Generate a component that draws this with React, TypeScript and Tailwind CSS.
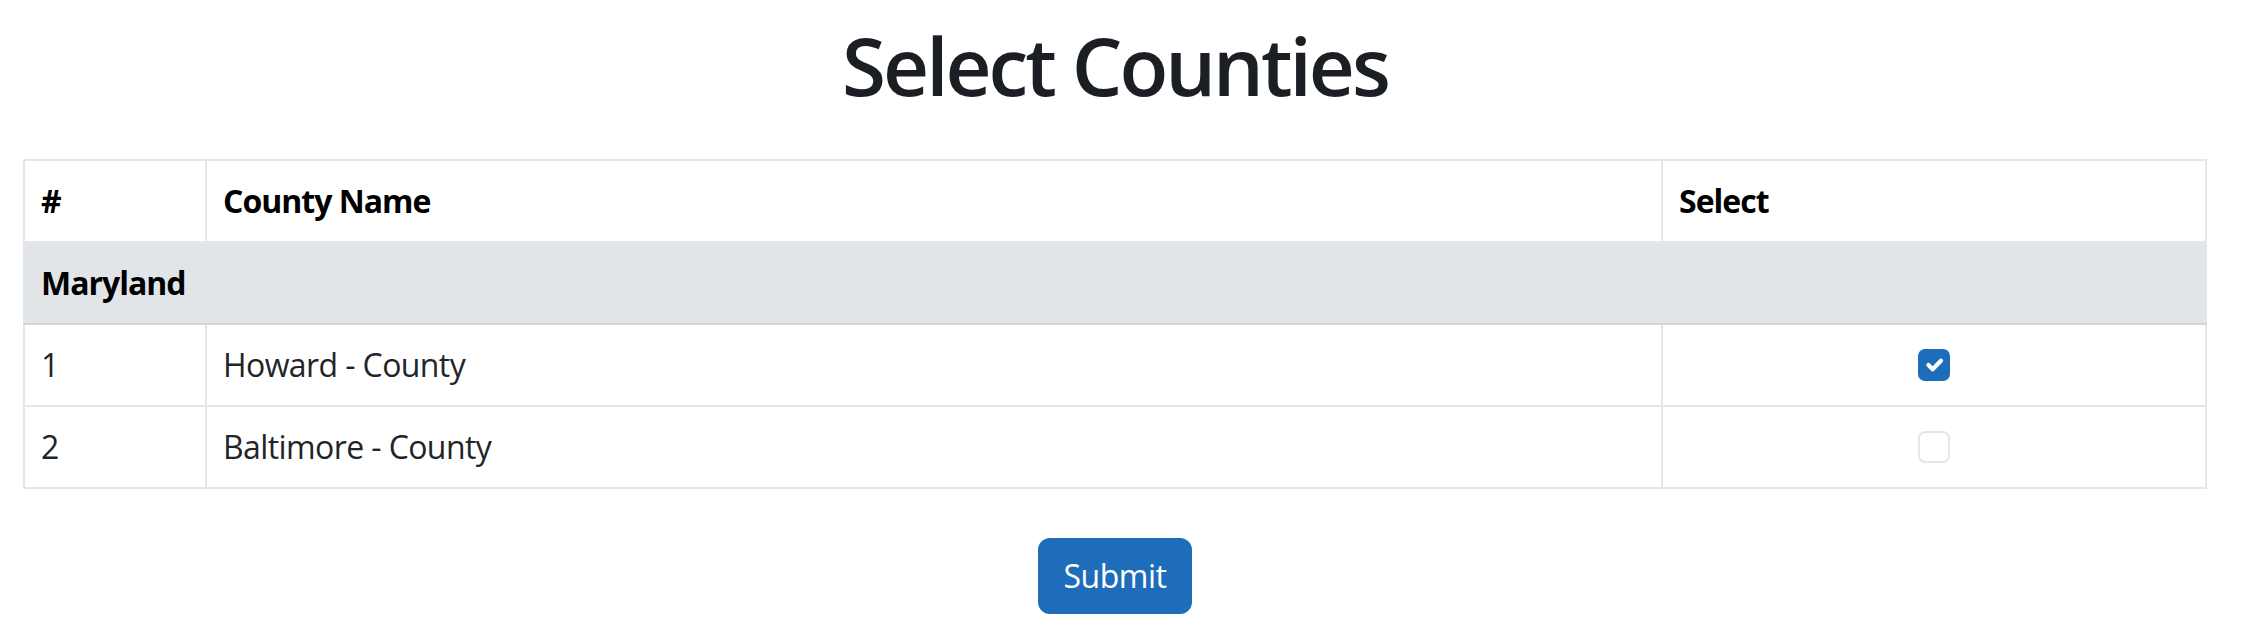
import { useState } from 'react';

interface County {
  id: number;
  name: string;
}

const counties: County[] = [
  { id: 1, name: 'Howard - County' },
  { id: 2, name: 'Baltimore - County' },
];

const CheckBox = ({ checked, onToggle }: { checked: boolean; onToggle: () => void }) => (
  <button
    type="button"
    onClick={onToggle}
    className={
      checked
        ? 'flex h-[32px] w-[32px] items-center justify-center rounded-[7px] border-2 border-[#1e6dbb] bg-[#1e6dbb]'
        : 'flex h-[32px] w-[32px] items-center justify-center rounded-[7px] border-2 border-[#e3e6ea] bg-white'
    }
  >
    {checked && (
      <svg viewBox="0 0 20 20" className="h-[28px] w-[28px]">
        <path d="m6 10 3 3 6-6" fill="none" stroke="#fff" strokeWidth="3" strokeLinecap="round" strokeLinejoin="round" />
      </svg>
    )}
  </button>
);

export default function App() {
  const [selected, setSelected] = useState<Record<number, boolean>>({ 1: true });

  return (
    <div className="min-h-screen bg-white pl-[23px] pr-[37px] pt-[17px] font-['Open_Sans',sans-serif] text-[#212529]">
      <h1 className="mb-[46px] text-center text-[80px] font-semibold leading-[1.2] tracking-[-3px] text-[#1b1f23]">Select Counties</h1>

      <table className="w-full border-collapse border-2 border-[#e3e6ea] text-[32px] leading-[48px] tracking-[-0.6px]">
        <thead>
          <tr className="text-left font-bold tracking-[-1px] text-black">
            <th className="w-[182px] border-2 border-[#e3e6ea] px-[16px] py-[16px]">#</th>
            <th className="w-[1456px] border-2 border-[#e3e6ea] px-[16px] py-[16px]">County Name</th>
            <th className="border-2 border-[#e3e6ea] px-[16px] py-[16px]">Select</th>
          </tr>
        </thead>
        <tbody>
          <tr className="bg-[#e2e5e8]">
            <td colSpan={3} className="border-2 border-b-[#d2d5d9] border-[#e3e6ea] px-[16px] py-[16px] font-bold tracking-[-1px] text-black">
              Maryland
            </td>
          </tr>
          {counties.map((c) => (
            <tr key={c.id}>
              <td className="border-2 border-[#e3e6ea] px-[16px] py-[16px]">{c.id}</td>
              <td className="border-2 border-[#e3e6ea] px-[16px] py-[16px]">{c.name}</td>
              <td className="border-2 border-[#e3e6ea] px-[16px] py-[16px]">
                <div className="flex justify-center">
                  <CheckBox
                    checked={!!selected[c.id]}
                    onToggle={() => setSelected((s) => ({ ...s, [c.id]: !s[c.id] }))}
                  />
                </div>
              </td>
            </tr>
          ))}
        </tbody>
      </table>

      <div className="mt-[49px] flex justify-center">
        <button
          type="submit"
          className="rounded-[12px] border-2 border-[#1e6dbb] bg-[#1e6dbb] px-[24px] py-[12px] text-[32px] leading-[48px] tracking-[-0.5px] text-white"
        >
          Submit
        </button>
      </div>
    </div>
  );
}
